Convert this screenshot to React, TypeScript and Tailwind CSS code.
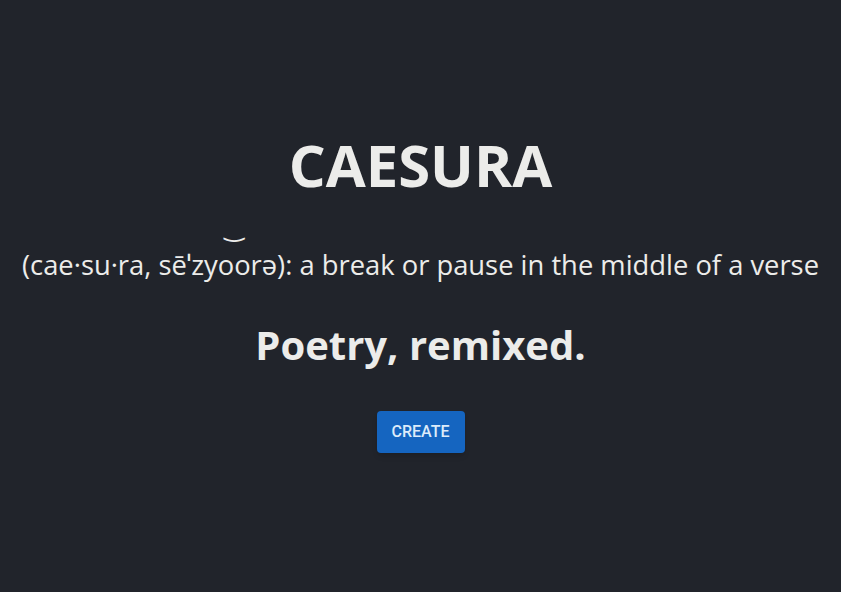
export default function App() {
  return (
    <div className="flex min-h-screen flex-col items-center justify-center bg-[#21242b] pb-[3px] text-center text-[#ececea] [font-family:'Open_Sans','Noto_Sans',sans-serif]">
      <h1 className="text-[58px] font-bold leading-none">CAESURA</h1>
      <p className="mt-[57px] text-[27.35px] leading-none">
        (cae·su·ra, sēˈzy
        <span className="relative">
          oo
          <span className="absolute left-1/2 top-[-30px] -translate-x-1/2 text-[24px] leading-none [font-family:'DejaVu_Sans',sans-serif]">
            ‿
          </span>
        </span>
        rə): a break or pause in the middle of a verse
      </p>
      <h2 className="mt-[46px] text-[40px] font-bold leading-none">Poetry, remixed.</h2>
      <button className="mt-[46px] h-[42px] w-[88px] rounded bg-[#1565c0] text-[16px] font-medium text-[#dcebfa] shadow-md [font-family:Roboto,sans-serif]">
        CREATE
      </button>
    </div>
  );
}
